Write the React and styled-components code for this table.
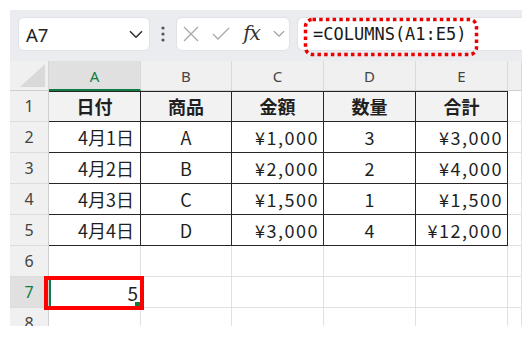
import React from "react";
import styled, { createGlobalStyle } from "styled-components";

const Global = createGlobalStyle`
  body {
    margin: 0;
    background: #ffffff;
    font-family: "Noto Sans", "Noto Sans CJK JP", sans-serif;
  }
`;

const Frame = styled.div`
  width: 512px;
  padding: 10px 9px 14px 10px;
`;

const Toolbar = styled.div`
  height: 51px;
  box-sizing: border-box;
  padding: 7px 0 10px 8px;
  background: #eaecef;
  display: flex;
  align-items: stretch;
`;

const Box = styled.div`
  background: #ffffff;
  border: 1px solid #dfe2e6;
  border-radius: 6px;
  box-sizing: border-box;
  display: flex;
  align-items: center;
`;

const NameBox = styled(Box)`
  width: 132px;
  padding: 0 6px 0 7px;
  justify-content: space-between;
  font-size: 18.5px;
  color: #222;
`;

const Grip = styled.div`
  width: 26px;
  display: flex;
  align-items: center;
  justify-content: center;
`;

const FxBox = styled(Box)`
  width: 114px;
  padding: 0 4px 0 6px;
  justify-content: space-between;
`;

const FxText = styled.span`
  font-family: "DejaVu Serif", "Liberation Serif", serif;
  font-style: italic;
  font-size: 20px;
  color: #333;
  letter-spacing: -1px;
  margin-top: -3px;
`;

const FormulaBar = styled(Box)`
  flex: 1;
  margin-left: 7px;
  border-radius: 6px 0 0 6px;
  border-right: none;
  position: relative;
  padding-left: 15px;
  font-family: "DejaVu Sans Mono", "Liberation Mono", monospace;
  font-size: 17px;
  color: #1a1a1a;
`;

const DottedMark = styled.svg`
  position: absolute;
  left: 6px;
  top: 0px;
  overflow: visible;
`;

const Sheet = styled.div`
  display: grid;
  grid-template-columns: 39px 92px 91px 92px 92px 92px 1fr;
  grid-template-rows: 30px;
  grid-auto-rows: 31px;
  height: 265px;
  overflow: hidden;
`;

const Corner = styled.div`
  background: #f0f0f0;
  border-right: 1px solid #d4d4d4;
  border-bottom: 1px solid #cfcfcf;
  box-sizing: border-box;
  position: relative;
`;

const ColHead = styled.div`
  background: ${(p) => (p.$active ? "#e0e0e0" : "#f0f0f0")};
  color: ${(p) => (p.$active ? "#107c41" : "#444")};
  border-right: 1px solid #dadada;
  border-bottom: ${(p) => (p.$active ? "2px solid #107c41" : "1px solid #cfcfcf")};
  box-sizing: border-box;
  display: flex;
  align-items: center;
  justify-content: center;
  font-size: 15px;
  padding-top: 1px;
`;

const RowHead = styled.div`
  background: ${(p) => (p.$active ? "#e0e0e0" : "#f0f0f0")};
  color: ${(p) => (p.$active ? "#107c41" : "#444")};
  border-right: 1px solid #cfcfcf;
  border-bottom: 1px solid #dcdcdc;
  box-sizing: border-box;
  display: flex;
  align-items: center;
  justify-content: center;
  font-size: 16px;
`;

const Cell = styled.div`
  position: relative;
  box-sizing: border-box;
  background: ${(p) => (p.$head ? "#f2f2f2" : "#ffffff")};
  border-right: 1px solid ${(p) => (p.$table ? "#262626" : "#e1e1e1")};
  border-bottom: 1px solid ${(p) => (p.$table ? "#262626" : "#e1e1e1")};
  box-shadow: ${(p) => (p.$top ? "inset 0 1px 0 #262626" : "none")};
  display: flex;
  align-items: center;
  justify-content: ${(p) =>
    p.$align === "right" ? "flex-end" : p.$align === "center" ? "center" : "flex-start"};
  padding: 0 ${(p) => (p.$wide ? "4px" : "6px")} 0 6px;
  font-family: "Noto Sans CJK JP", sans-serif;
  font-size: 18px;
  letter-spacing: ${(p) => (p.$wide ? "1.5px" : "0")};
  font-weight: ${(p) => (p.$head ? 700 : 400)};
  color: #1f1f1f;
`;

const SelectedCell = styled(Cell)`
  z-index: 2;
  padding-right: 2px;
  font-size: 19px;
  box-shadow: inset 2px 0 0 #107c41;
`;

const FillHandle = styled.span`
  position: absolute;
  right: -1px;
  bottom: -1px;
  width: 5px;
  height: 5px;
  background: #107c41;
  border: 1px solid #fff;
`;

const RedFrame = styled.span`
  position: absolute;
  left: -5px;
  top: -1px;
  right: -4px;
  bottom: -3px;
  border: 4px solid #ff0000;
`;

const Chevron = ({ size = 14, color = "#333", width = 1.6 }) => (
  <svg width={size} height={size * 0.6} viewBox="0 0 14 8">
    <polyline points="1,1 7,7 13,1" fill="none" stroke={color} strokeWidth={width} />
  </svg>
);

const columns = ["A", "B", "C", "D", "E", ""];

const rows = [
  [
    { v: "日付", a: "center" },
    { v: "商品", a: "center" },
    { v: "金額", a: "center" },
    { v: "数量", a: "center" },
    { v: "合計", a: "center" },
  ],
  [
    { v: "4月1日", a: "right" },
    { v: "A", a: "center" },
    { v: "¥1,000", a: "right", w: true },
    { v: "3", a: "center" },
    { v: "¥3,000", a: "right", w: true },
  ],
  [
    { v: "4月2日", a: "right" },
    { v: "B", a: "center" },
    { v: "¥2,000", a: "right", w: true },
    { v: "2", a: "center" },
    { v: "¥4,000", a: "right", w: true },
  ],
  [
    { v: "4月3日", a: "right" },
    { v: "C", a: "center" },
    { v: "¥1,500", a: "right", w: true },
    { v: "1", a: "center" },
    { v: "¥1,500", a: "right", w: true },
  ],
  [
    { v: "4月4日", a: "right" },
    { v: "D", a: "center" },
    { v: "¥3,000", a: "right", w: true },
    { v: "4", a: "center" },
    { v: "¥12,000", a: "right", w: true },
  ],
];

export default function App() {
  return (
    <Frame>
      <Global />
      <Toolbar>
        <NameBox>
          <span>A7</span>
          <Chevron />
        </NameBox>
        <Grip>
          <svg width="4" height="16" viewBox="0 0 4 16">
            <circle cx="2" cy="2" r="1.6" fill="#555" />
            <circle cx="2" cy="8" r="1.6" fill="#555" />
            <circle cx="2" cy="14" r="1.6" fill="#555" />
          </svg>
        </Grip>
        <FxBox>
          <svg width="16" height="16" viewBox="0 0 16 16">
            <path d="M1 1 L15 15 M15 1 L1 15" stroke="#a8a8a8" strokeWidth="1.3" />
          </svg>
          <svg width="18" height="14" viewBox="0 0 18 14">
            <polyline points="1,7 6,12 17,1" fill="none" stroke="#a8a8a8" strokeWidth="1.3" />
          </svg>
          <FxText>fx</FxText>
          <Chevron size={12} color="#999" width={1.3} />
        </FxBox>
        <FormulaBar>
          =COLUMNS(A1:E5)
          <DottedMark width="174" height="38">
            <rect
              x="1.5"
              y="1.5"
              width="171"
              height="35"
              rx="7"
              fill="none"
              stroke="#ee0000"
              strokeWidth="3.5"
              strokeDasharray="3.5 3.2"
            />
          </DottedMark>
        </FormulaBar>
      </Toolbar>
      <Sheet>
        <Corner>
          <svg
            width="25"
            height="23"
            viewBox="0 0 25 23"
            style={{ position: "absolute", right: 3, bottom: 3 }}
          >
            <polygon points="25,0 25,23 0,23" fill="#d9d9d9" />
          </svg>
        </Corner>
        {columns.map((c, i) => (
          <ColHead key={i} $active={c === "A"}>
            {c}
          </ColHead>
        ))}
        {rows.map((r, ri) => (
          <React.Fragment key={ri}>
            <RowHead>{ri + 1}</RowHead>
            {r.map((cell, ci) => (
              <Cell
                key={ci}
                $table
                $top={ri === 0}
                $head={ri === 0}
                $align={cell.a}
                $wide={cell.w}
              >
                {cell.v}
              </Cell>
            ))}
            <Cell />
          </React.Fragment>
        ))}
        {[6, 7, 8].map((n) => (
          <React.Fragment key={n}>
            <RowHead $active={n === 7}>{n}</RowHead>
            {n === 7 ? (
              <SelectedCell $align="right">
                5
                <FillHandle />
                <RedFrame />
              </SelectedCell>
            ) : (
              <Cell />
            )}
            <Cell />
            <Cell />
            <Cell />
            <Cell />
            <Cell />
          </React.Fragment>
        ))}
      </Sheet>
    </Frame>
  );
}
